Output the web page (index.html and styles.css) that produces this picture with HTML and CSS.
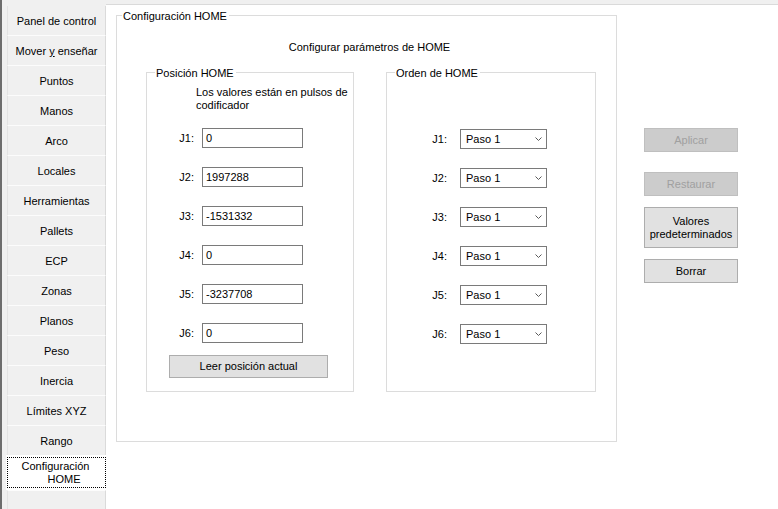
FILE: index.html
```html
<!DOCTYPE html>
<html lang="es">
<head>
<meta charset="utf-8">
<title>Configuración HOME</title>
<link rel="stylesheet" href="styles.css">
</head>
<body>
<div class="app">
  <nav class="rail">
    <div class="tab"><span>Panel de control</span></div>
    <div class="tab"><span>Mover <u>y</u> enseñar</span></div>
    <div class="tab"><span>Puntos</span></div>
    <div class="tab"><span>Manos</span></div>
    <div class="tab"><span>Arco</span></div>
    <div class="tab"><span>Locales</span></div>
    <div class="tab"><span>Herramientas</span></div>
    <div class="tab"><span>Pallets</span></div>
    <div class="tab"><span>ECP</span></div>
    <div class="tab"><span>Zonas</span></div>
    <div class="tab"><span>Planos</span></div>
    <div class="tab"><span>Peso</span></div>
    <div class="tab"><span>Inercia</span></div>
    <div class="tab"><span>Límites XYZ</span></div>
    <div class="tab"><span>Rango</span></div>
    <div class="tab selected">
      <div class="focus">
        <span class="line1">Configuración</span>
        <span class="line2">HOME</span>
      </div>
    </div>
    <div class="filler"></div>
  </nav>
  <main class="page">
    <section class="group outer">
      <div class="legend">Configuración HOME</div>
      <div class="title">Configurar parámetros de HOME</div>
      <div class="inner-row">
        <section class="group pos">
          <div class="legend">Posición HOME</div>
          <p class="note">Los valores están en pulsos de codificador</p>
          <div class="grid pos-grid">
            <span class="lbl">J1:</span><div class="input">0</div>
            <span class="lbl">J2:</span><div class="input">1997288</div>
            <span class="lbl">J3:</span><div class="input">-1531332</div>
            <span class="lbl">J4:</span><div class="input">0</div>
            <span class="lbl">J5:</span><div class="input">-3237708</div>
            <span class="lbl">J6:</span><div class="input">0</div>
          </div>
          <button class="btn read">Leer posición actual</button>
        </section>
        <section class="group order">
          <div class="legend">Orden de HOME</div>
          <div class="grid order-grid">
            <span class="lbl">J1:</span><div class="select"><span>Paso 1</span><svg class="chev" width="7" height="4" viewBox="0 0 7 4"><polyline points="0.5,0.5 3.5,3.5 6.5,0.5" fill="none" stroke="#5a5a5a" stroke-width="1"/></svg></div>
            <span class="lbl">J2:</span><div class="select"><span>Paso 1</span><svg class="chev" width="7" height="4" viewBox="0 0 7 4"><polyline points="0.5,0.5 3.5,3.5 6.5,0.5" fill="none" stroke="#5a5a5a" stroke-width="1"/></svg></div>
            <span class="lbl">J3:</span><div class="select"><span>Paso 1</span><svg class="chev" width="7" height="4" viewBox="0 0 7 4"><polyline points="0.5,0.5 3.5,3.5 6.5,0.5" fill="none" stroke="#5a5a5a" stroke-width="1"/></svg></div>
            <span class="lbl">J4:</span><div class="select"><span>Paso 1</span><svg class="chev" width="7" height="4" viewBox="0 0 7 4"><polyline points="0.5,0.5 3.5,3.5 6.5,0.5" fill="none" stroke="#5a5a5a" stroke-width="1"/></svg></div>
            <span class="lbl">J5:</span><div class="select"><span>Paso 1</span><svg class="chev" width="7" height="4" viewBox="0 0 7 4"><polyline points="0.5,0.5 3.5,3.5 6.5,0.5" fill="none" stroke="#5a5a5a" stroke-width="1"/></svg></div>
            <span class="lbl">J6:</span><div class="select"><span>Paso 1</span><svg class="chev" width="7" height="4" viewBox="0 0 7 4"><polyline points="0.5,0.5 3.5,3.5 6.5,0.5" fill="none" stroke="#5a5a5a" stroke-width="1"/></svg></div>
          </div>
        </section>
      </div>
    </section>
    <div class="actions">
      <button class="btn side disabled">Aplicar</button>
      <button class="btn side disabled restore">Restaurar</button>
      <button class="btn side tall">Valores<br>predeterminados</button>
      <button class="btn side clear">Borrar</button>
    </div>
  </main>
</div>
</body>
</html>
```
FILE: styles.css
```css
html, body {
  margin: 0;
  padding: 0;
}
body {
  background: #f0f0f0;
  font-family: "Liberation Sans", Arial, sans-serif;
  font-size: 11px;
  color: #000;
  overflow: hidden;
  width: 778px;
  height: 509px;
}
.app {
  display: flex;
  height: 509px;
}
.rail {
  width: 106px;
  flex: none;
  box-sizing: border-box;
  border-left: 2px solid #6d6d6d;
  padding: 6px 0 0 5px;
  display: flex;
  flex-direction: column;
}
.tab {
  width: 99px;
  height: 30px;
  flex: none;
  box-sizing: border-box;
  display: flex;
  align-items: center;
  justify-content: center;
  padding-top: 2px;
  border-left: 1px solid #e3e3e3;
  border-right: 1px solid #dadada;
  border-bottom: 1px solid #fcfcfc;
  background: #f0f0f0;
  line-height: 13px;
  white-space: nowrap;
}
.tab.selected {
  width: 101px;
  height: 35px;
  margin: -1px -1px 0 -1px;
  padding: 2px 1px 3px 1px;
  border: none;
  background: #fff;
  position: relative;
  z-index: 1;
}
.focus {
  width: 99px;
  height: 31px;
  box-sizing: border-box;
  border: 1px dotted #000;
  padding-top: 1px;
  display: flex;
  flex-direction: column;
  align-items: center;
  justify-content: center;
  line-height: 13px;
}
.line1 {
  margin-right: 2px;
}
.line2 {
  padding-left: 15px;
}
.filler {
  flex: 1;
  width: 99px;
  box-sizing: border-box;
  border-left: 1px solid #e3e3e3;
  border-right: 1px solid #dadada;
  border-top: 1px solid #fcfcfc;
}
.page {
  flex: 1;
  margin-top: 4px;
  border-top: 1px solid #dadada;
  background: #fff;
  display: flex;
  align-items: flex-start;
  padding: 10px 0 0 10px;
}
.group {
  border: 1px solid #dcdcdc;
  box-sizing: border-box;
}
.legend {
  display: block;
  width: fit-content;
  margin: -7px 0 0 5px;
  padding: 0 2px 0 1px;
  background: #fff;
  line-height: 14px;
  white-space: nowrap;
}
.outer {
  width: 501px;
  height: 427px;
  flex: none;
}
.title {
  margin-top: 17px;
  line-height: 14px;
  text-align: center;
  padding-left: 6px;
}
.inner-row {
  display: flex;
  gap: 32px;
  margin: 18px 0 0 29px;
}
.pos {
  width: 208px;
  height: 320px;
}
.order {
  width: 210px;
  height: 320px;
}
.pos .legend,
.order .legend {
  margin-left: 8px;
}
.note {
  margin: 6px 0 0 49px;
  width: 155px;
  line-height: 13px;
}
.grid {
  display: grid;
  grid-auto-rows: 20px;
  row-gap: 19px;
}
.pos-grid {
  grid-template-columns: 48px 101px;
  column-gap: 7px;
  margin-top: 16px;
}
.order-grid {
  grid-template-columns: 61px 87px;
  column-gap: 12px;
  margin-top: 49px;
}
.lbl {
  text-align: right;
  line-height: 20px;
  padding-right: 1px;
}
.input {
  box-sizing: border-box;
  height: 20px;
  border: 1px solid #7a7a7a;
  background: #fff;
  padding: 0 3px;
  line-height: 18px;
}
.select {
  box-sizing: border-box;
  height: 20px;
  border: 1px solid #7a7a7a;
  background: #fff;
  padding: 0 4px 0 5px;
  display: flex;
  align-items: center;
  justify-content: space-between;
  line-height: 18px;
}
.chev {
  display: block;
}
.btn {
  font-family: "Liberation Sans", Arial, sans-serif;
  font-size: 11px;
  color: #000;
  background: #e1e1e1;
  border: 1px solid #adadad;
  box-sizing: border-box;
  padding: 0;
  margin: 0;
  line-height: 13px;
}
.read {
  display: block;
  width: 159px;
  height: 23px;
  margin: 12px 0 0 22px;
}
.actions {
  display: flex;
  flex-direction: column;
  margin: 113px 0 0 27px;
}
.side {
  width: 94px;
  height: 24px;
}
.disabled {
  background: #cccccc;
  border-color: #bfbfbf;
  color: #a0a0a0;
}
.restore {
  margin-top: 20px;
}
.tall {
  height: 41px;
  margin-top: 11px;
}
.clear {
  margin-top: 11px;
}
```
